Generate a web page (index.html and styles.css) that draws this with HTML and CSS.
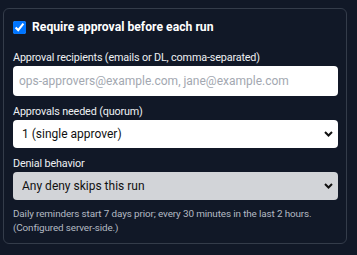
FILE: index.html
```html
<!DOCTYPE html>
<html lang="en">
<head>
    <meta charset="UTF-8">
    <meta name="viewport" content="width=device-width, initial-scale=1.0">
    <title>Run approval</title>
    <link rel="stylesheet" href="styles.css">
</head>
<body>

    <div class="card">
        <!-- Toggle -->
        <label class="toggle">
            <input type="checkbox" checked>
            <span>Require approval before each run</span>
        </label>

        <!-- Recipients -->
        <div class="field">
            <label for="recipients">Approval recipients (emails or DL, comma-separated)</label>
            <input id="recipients" type="text" placeholder="ops-approvers@example.com, jane@example.com">
        </div>

        <!-- Quorum -->
        <div class="field">
            <label for="quorum">Approvals needed (quorum)</label>
            <div class="select-wrap">
                <select id="quorum">
                    <option>1 (single approver)</option>
                    <option>2</option>
                    <option>All recipients</option>
                </select>
                <svg class="chevron" viewBox="0 0 9 6" width="9" height="6"><path d="M1 1l3.5 3.5L8 1" fill="none" stroke="#111" stroke-width="2"/></svg>
            </div>
        </div>

        <!-- Denial -->
        <div class="field">
            <label for="denial">Denial behavior</label>
            <div class="select-wrap">
                <select id="denial" class="muted">
                    <option>Any deny skips this run</option>
                    <option>Any deny cancels the schedule</option>
                </select>
                <svg class="chevron" viewBox="0 0 9 6" width="9" height="6"><path d="M1 1l3.5 3.5L8 1" fill="none" stroke="#111" stroke-width="2"/></svg>
            </div>
        </div>

        <p class="hint">Daily reminders start 7 days prior; every 30 minutes in the last 2 hours.<br>(Configured server-side.)</p>
    </div>

</body>
</html>
```

FILE: styles.css
```css
/* General styles */
body {
    font-family: Roboto, "Liberation Sans", sans-serif;
    background: #111827;
    color: #e5e7eb;
    margin: 0;
    padding: 8px 10px 0 3px;
}

.card {
    border: 1px solid #343c4a;
    border-radius: 6px;
    padding: 8px 8px 8px 9px;
}

.toggle {
    display: flex;
    align-items: center;
    gap: 6px;
    height: 20px;
    font-size: 12.2px;
    font-weight: bold;
    color: #fff;
}

.toggle input {
    width: 13px;
    height: 13px;
    margin: 0;
}

.field {
    margin-top: 8px;
}

.toggle + .field {
    margin-top: 13px;
}

.field label {
    display: block;
    font-size: 10.8px;
    letter-spacing: -0.15px;
    line-height: 16px;
    color: #eef0f3;
}

.field input,
.field select {
    display: block;
    width: 100%;
    box-sizing: border-box;
    border: none;
    border-radius: 4px;
    font-family: Roboto, "Liberation Sans", sans-serif;
    font-size: 12px;
    color: #111;
    background: #fff;
    outline: none;
}

.field input {
    height: 30px;
    padding: 0 6px;
}

.field input::placeholder {
    color: #a3a8b1;
}

.field select {
    height: 28px;
    padding: 0 24px 0 9px;
    appearance: none;
}

.field select.muted {
    background: #d2d4d8;
}

/* Arrow on the right of each select */
.select-wrap {
    position: relative;
}

.chevron {
    position: absolute;
    right: 5px;
    top: 11px;
    pointer-events: none;
}

.hint {
    margin: 7px 0 0;
    font-size: 9.9px;
    letter-spacing: -0.12px;
    line-height: 14px;
    color: #b4bac3;
}
```
